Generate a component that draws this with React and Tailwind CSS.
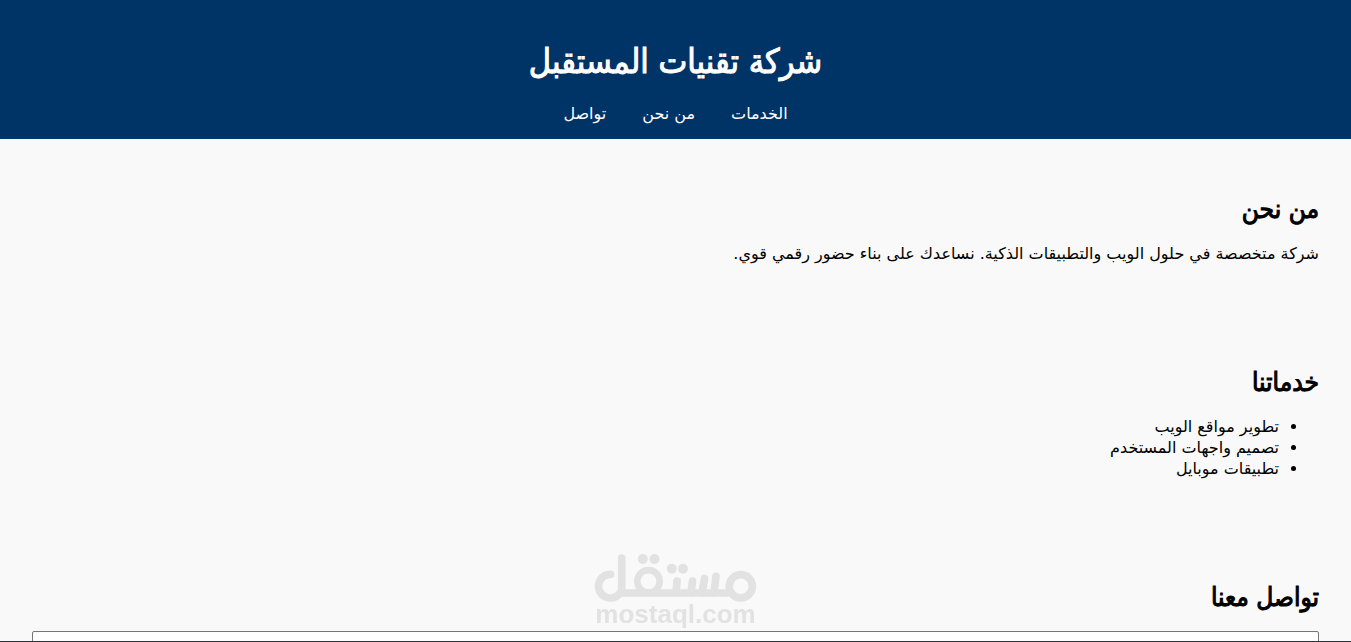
import React from 'react';

const navLinks = [
  { href: '#services', label: 'الخدمات' },
  { href: '#about', label: 'من نحن' },
  { href: '#contact', label: 'تواصل' },
];

const services = ['تطوير مواقع الويب', 'تصميم واجهات المستخدم', 'تطبيقات موبايل'];

const Section = ({ id, title, children }) => (
  <section id={id} className="px-8 pt-13 pb-12">
    <h2 className="mb-4 font-['DejaVu_Sans_Condensed','DejaVu_Sans',sans-serif] text-[26px]/9 font-normal [-webkit-text-stroke:1px_currentColor]">
      {title}
    </h2>
    {children}
  </section>
);

const Watermark = () => (
  <div dir="ltr" className="pointer-events-none fixed inset-x-0 bottom-3 flex flex-col items-center text-[#e2e2e2]">
    <svg viewBox="0 0 164 50" className="h-[50px] w-[164px]" fill="none" stroke="currentColor" strokeWidth="7.7" strokeLinecap="round">
      <path d="M16.5 22.4 A11.8 11.8 0 1 0 26 41 H135" />
      <path d="M27.7 6 V41" />
      <circle cx="54.5" cy="29.3" r="11.2" strokeWidth="6.6" />
      <circle cx="146.8" cy="34.3" r="11.6" />
      <path d="M83 29 L82 41 M98.5 29 L97 41 M110.5 26.5 L108 41 M122 24.3 L120 41" />
      <g fill="currentColor" stroke="none">
        <circle cx="48.8" cy="7" r="5" />
        <circle cx="60.5" cy="7" r="5" />
        <circle cx="77.8" cy="16.8" r="5" />
        <circle cx="89" cy="16.8" r="5" />
      </g>
    </svg>
    <span className="mb-1 font-['Liberation_Sans',sans-serif] text-[26px]/6 font-bold">mostaql.com</span>
  </div>
);

const App = () => {
  return (
    <div
      dir="rtl"
      className="h-screen overflow-hidden bg-[#f9f9f9] font-['DejaVu_Sans',sans-serif] text-base/[21px] text-black"
    >
      <header className="bg-[#003366] px-4 pt-10 pb-[15px] text-center text-white">
        <h1 className="mb-5 font-['DejaVu_Sans_Condensed','DejaVu_Sans',sans-serif] text-[34px]/[43px] font-normal [-webkit-text-stroke:1px_currentColor]">
          شركة تقنيات المستقبل
        </h1>
        <nav className="flex justify-center gap-9">
          {navLinks.map((link) => (
            <a key={link.href} href={link.href}>{link.label}</a>
          ))}
        </nav>
      </header>

      <main>
        <Section id="about" title="من نحن">
          <p>شركة متخصصة في حلول الويب والتطبيقات الذكية. نساعدك على بناء حضور رقمي قوي.</p>
        </Section>

        <Section id="services" title="خدماتنا">
          <ul className="list-disc ps-10">
            {services.map((service) => (
              <li key={service}>{service}</li>
            ))}
          </ul>
        </Section>

        <Section id="contact" title="تواصل معنا">
          <form>
            <input
              type="text"
              aria-label="الاسم"
              className="block h-10 w-full rounded-xs border border-[#767676] bg-white px-2"
            />
          </form>
        </Section>
      </main>

      <Watermark />
      <div className="fixed inset-x-0 bottom-0 h-px bg-[#26323c]" />
    </div>
  );
};

export default App;
